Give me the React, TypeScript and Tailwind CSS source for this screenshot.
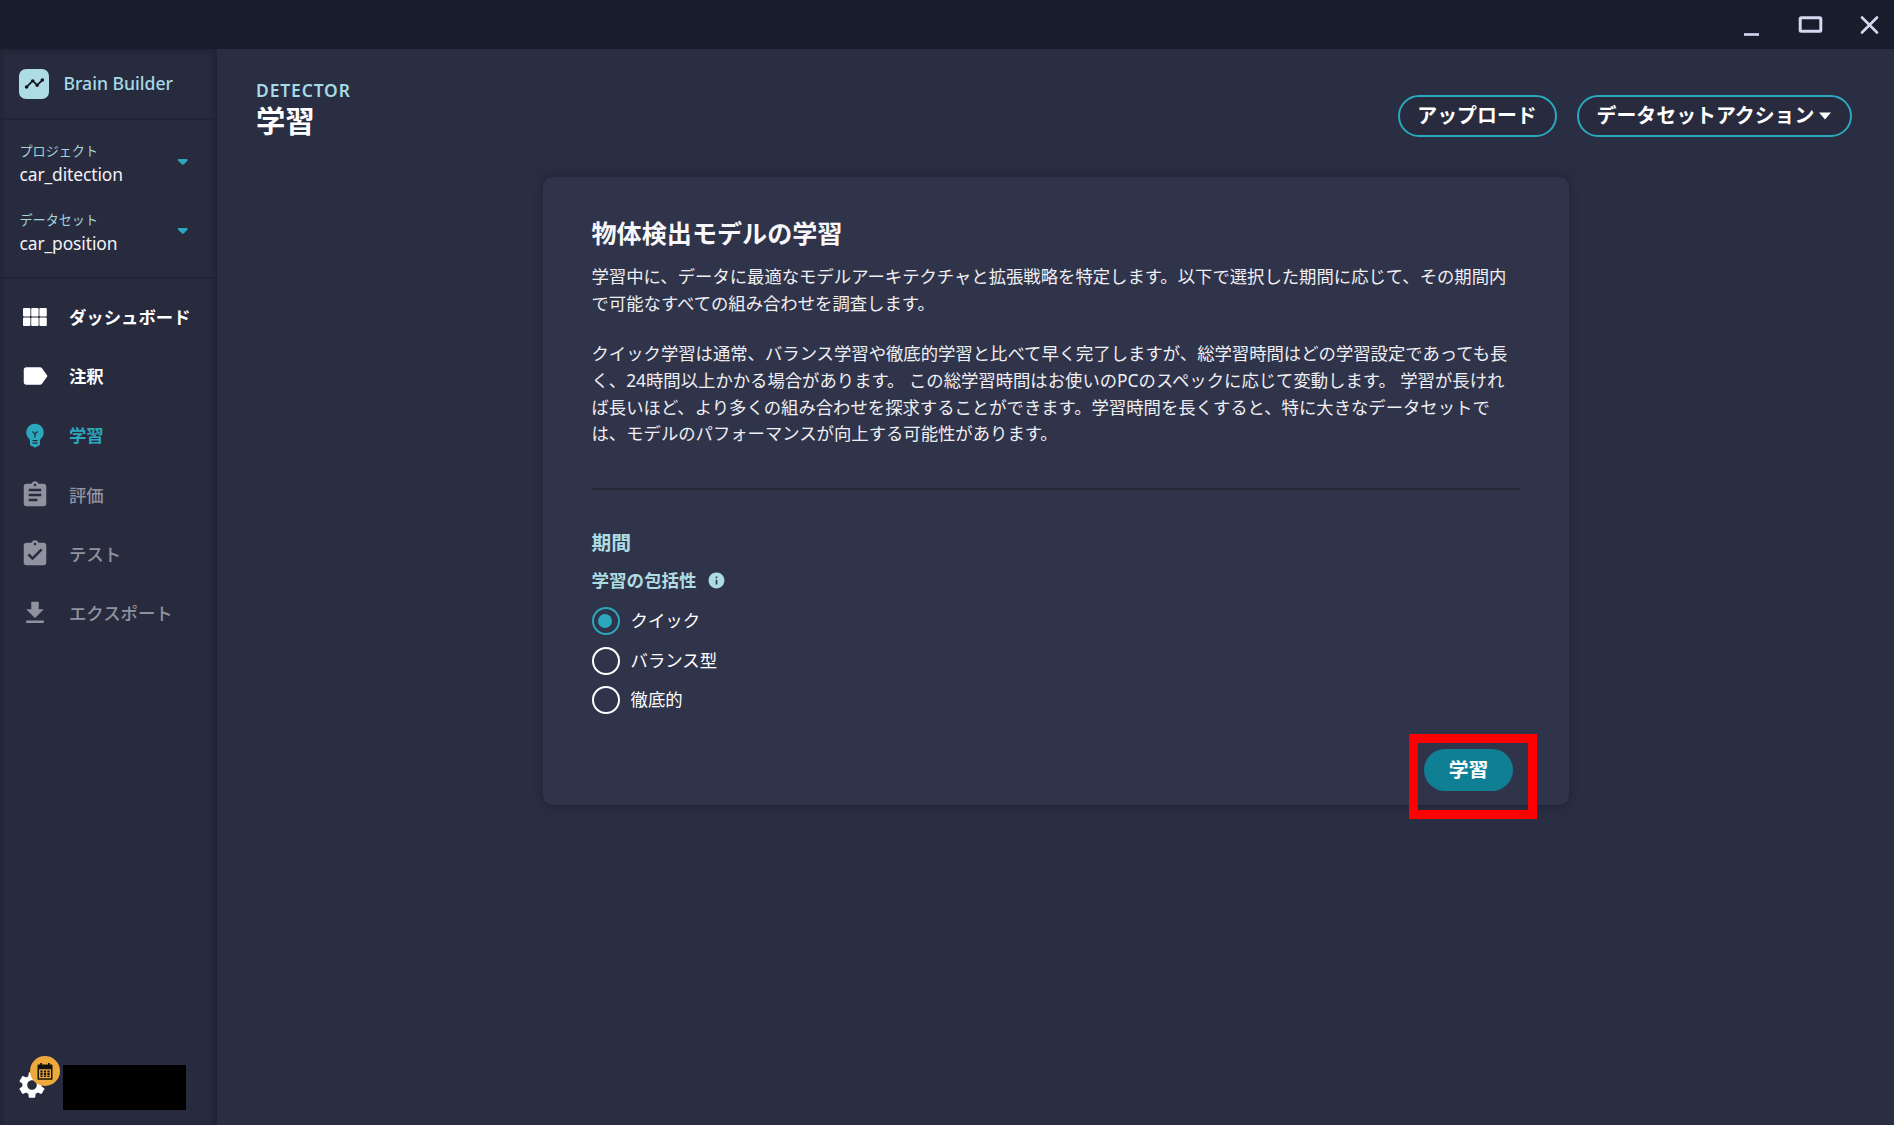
import {
  MdAssignment,
  MdAssignmentTurnedIn,
  MdDownload,
  MdEmojiObjects,
  MdInfo,
  MdLabel,
  MdSettings,
  MdTimeline,
} from 'react-icons/md';
import { clsx } from 'clsx';
import { useState } from 'react';
import type { ComponentType } from 'react';

type IconProps = { className?: string };

function GridIcon({ className }: IconProps) {
  return (
    <svg viewBox="0 0 30 30" fill="currentColor" className={className}>
      <rect x="3" y="6" width="7.4" height="8.6" rx="1" />
      <rect x="11.2" y="6" width="7.4" height="8.6" rx="1" />
      <rect x="19.4" y="6" width="7.4" height="8.6" rx="1" />
      <rect x="3" y="15.4" width="7.4" height="8.6" rx="1" />
      <rect x="11.2" y="15.4" width="7.4" height="8.6" rx="1" />
      <rect x="19.4" y="15.4" width="7.4" height="8.6" rx="1" />
    </svg>
  );
}

function CalendarIcon({ className }: IconProps) {
  return (
    <svg viewBox="0 0 16 17" fill="currentColor" className={className}>
      <path d="M3.2 0h1.8v3H3.2zM11 0h1.8v3H11z" />
      <path
        fillRule="evenodd"
        d="M1.5 1.6h13c.6 0 1 .4 1 1v13.2c0 .6-.4 1-1 1h-13c-.6 0-1-.4-1-1V2.6c0-.6.4-1 1-1zM2 6.2v9.1h12V6.2z"
      />
      <path d="M3.4 7.6h2.2v1.8H3.4zM6.9 7.6h2.2v1.8H6.9zM10.4 7.6h2.2v1.8h-2.2zM3.4 10.1h2.2v1.8H3.4zM6.9 10.1h2.2v1.8H6.9zM10.4 10.1h2.2v1.8h-2.2zM3.4 12.6h2.2v1.4H3.4zM6.9 12.6h2.2v1.4H6.9zM10.4 12.6h2.2v1.4h-2.2z" />
    </svg>
  );
}

type NavItem = {
  label: string;
  icon: ComponentType<IconProps>;
  state: 'enabled' | 'active' | 'disabled';
};

const navItems: NavItem[] = [
  { label: 'ダッシュボード', icon: GridIcon, state: 'enabled' },
  { label: '注釈', icon: MdLabel, state: 'enabled' },
  { label: '学習', icon: MdEmojiObjects, state: 'active' },
  { label: '評価', icon: MdAssignment, state: 'disabled' },
  { label: 'テスト', icon: MdAssignmentTurnedIn, state: 'disabled' },
  { label: 'エクスポート', icon: MdDownload, state: 'disabled' },
];

const durations = ['クイック', 'バランス型', '徹底的'];

function TitleBar() {
  return (
    <header className="flex h-[49px] shrink-0 items-start justify-end bg-[#191c2a] text-[#d5d8f0]">
      <svg width="150" height="49" viewBox="0 0 150 49" fill="none" stroke="currentColor">
        <path d="M0 34.5h15" strokeWidth="2.6" />
        <rect x="56.2" y="17.7" width="20.6" height="13.6" rx="1" strokeWidth="3" />
        <path d="M118 17.5l15 15M133 17.5l-15 15" strokeWidth="2.6" strokeLinecap="round" />
      </svg>
    </header>
  );
}

function Selector({ label, value }: { label: string; value: string }) {
  return (
    <button className="flex h-[69px] w-full items-center justify-between pr-[28px] pl-[19.5px] text-left">
      <span className="flex flex-col">
        <span className="text-[13.1px] leading-[23px] text-[#a5d3da]">{label}</span>
        <span className="text-[17.4px] leading-[23px] tracking-[-0.1px] text-[#f3f3f6]">{value}</span>
      </span>
      <svg width="12" height="8" viewBox="0 0 12 8" fill="#2ba8bd" className="-mt-[1px]">
        <path d="M1.8 1h7.8c1 0 1.4 1 .8 1.7L7.2 6.1c-.8.9-1.9.9-2.7 0L1.1 2.7C.5 2 .8 1 1.8 1z" />
      </svg>
    </button>
  );
}

function Sidebar() {
  return (
    <aside className="flex w-[217px] shrink-0 flex-col bg-[#282b3e] shadow-[inset_-5px_0_6px_-2px_#212434,inset_0_3px_5px_-2px_#212434,inset_3px_0_5px_-3px_#212434]">
      <div className="flex h-[71px] items-center gap-[14.5px] border-b-2 border-[#212434] pl-[19px]">
        <span className="flex size-[30px] items-center justify-center rounded-[7px] bg-[#addce4]">
          <MdTimeline className="size-[21px] text-[#12141d]" />
        </span>
        <span className="text-[17.6px] font-medium text-[#a5dbe6]">Brain Builder</span>
      </div>

      <div className="h-[159px] border-b-2 border-[#212434] pt-[8px]">
        <Selector label="プロジェクト" value="car_ditection" />
        <Selector label="データセット" value="car_position" />
      </div>

      <nav className="flex flex-col pt-[8.5px]">
        {navItems.map(({ label, icon: Icon, state }) => (
          <button
            key={label}
            disabled={state === 'disabled'}
            className={clsx(
              'flex h-[59.2px] items-center gap-[19px] pl-[20px] text-[17.36px]',
              state === 'enabled' && 'font-bold text-white',
              state === 'active' && 'font-bold text-[#2ba8bd]',
              state === 'disabled' && 'font-medium text-[#9192a0]'
            )}
          >
            <Icon className="size-[30px]" />
            <span>{label}</span>
          </button>
        ))}
      </nav>

      <div className="mt-auto flex h-[75px] items-start pl-[16px]">
        <div className="relative h-[60px] w-[47px]">
          <MdSettings className="mt-[19px] size-[32px] text-white" />
          <span className="absolute top-[6px] left-[14px] flex size-[30px] items-center justify-center rounded-full bg-[#eda93b]">
            <CalendarIcon className="h-[17px] w-[16px] text-[#15120c]" />
          </span>
        </div>
        <div className="mt-[15px] h-[45px] w-[123px] bg-black" />
      </div>
    </aside>
  );
}

function PageHeader() {
  return (
    <div className="flex justify-between pr-[42px] pl-[39px]">
      <div className="pt-[29px]">
        <p className="text-[17.4px] leading-[24px] font-semibold tracking-[0.9px] text-[#a5dbe6]">DETECTOR</p>
        <h1 className="-mt-px text-[29.3px] leading-[40px] font-bold text-white">学習</h1>
      </div>
      <div className="mt-[46px] flex h-[42px] gap-[20px] text-[19.9px] font-bold text-white">
        <button className="flex w-[159px] items-center justify-center rounded-full border-2 border-[#2ba8bd] bg-[#282b3e] pr-[1px]">
          アップロード
        </button>
        <button className="flex w-[275px] items-center justify-center gap-[5px] rounded-full border-2 border-[#2ba8bd] bg-[#282b3e] pr-[1px]">
          データセットアクション
          <svg width="12" height="8" viewBox="0 0 12 8" fill="currentColor">
            <path d="M0 .5h12L6 7.5z" />
          </svg>
        </button>
      </div>
    </div>
  );
}

function TrainingCard() {
  const [duration, setDuration] = useState('クイック');

  return (
    <section className="mt-[36px] ml-[325.5px] h-[628px] w-[1026px] rounded-[10px] bg-[#30344a] px-[49px] pt-[38px] shadow-[0_0_8px_2px_#232637]">
      <h2 className="text-[25.1px] leading-[36px] font-bold text-[#f8f8fa]">物体検出モデルの学習</h2>

      <div className="mt-[12px] text-[17.35px] leading-[26.67px] whitespace-nowrap text-[#efeff3]">
        <p>
          学習中に、データに最適なモデルアーキテクチャと拡張戦略を特定します。以下で選択した期間に応じて、その期間内
          <br />
          で可能なすべての組み合わせを調査します。
        </p>
        <p className="mt-[24px]">
          クイック学習は通常、バランス学習や徹底的学習と比べて早く完了しますが、総学習時間はどの学習設定であっても長
          <br />
          く、24時間以上かかる場合があります。 この総学習時間はお使いのPCのスペックに応じて変動します。 学習が長けれ
          <br />
          ば長いほど、より多くの組み合わせを探求することができます。学習時間を長くすると、特に大きなデータセットで
          <br />
          は、モデルのパフォーマンスが向上する可能性があります。
        </p>
      </div>

      <hr className="mt-[41px] w-[928px] border-t-2 border-[#272a3b]" />

      <h3 className="mt-[38px] text-[19.8px] leading-[30px] font-bold text-[#addce4]">期間</h3>
      <div className="mt-[8px] flex h-[28px] items-center gap-[10px] text-[17.5px] font-bold text-[#addce4]">
        学習の包括性
        <MdInfo className="size-[19px]" />
      </div>

      <div className="mt-[7.5px] flex flex-col">
        {durations.map((name) => (
          <button
            key={name}
            onClick={() => setDuration(name)}
            className="flex h-[39.5px] items-center gap-[11px] text-[17.4px] text-white"
          >
            <span
              className={clsx(
                'flex size-[28px] items-center justify-center rounded-full border-2',
                name === duration ? 'border-[#2ba8bd]' : 'border-white'
              )}
            >
              {name === duration && <span className="mr-[1px] size-[14px] rounded-full bg-[#2ba8bd]" />}
            </span>
            <span className="pb-[2px]">{name}</span>
          </button>
        ))}
      </div>

      <div className="mt-[29px] mr-[6.5px] flex justify-end">
        <div className="relative">
          <button className="h-[42px] w-[89px] rounded-full bg-[#0f8093] text-[19.8px] font-bold text-white">
            学習
          </button>
          <span className="pointer-events-none absolute -top-[15px] -left-[15px] h-[85px] w-[128px] border-[9px] border-[#ff0000]" />
        </div>
      </div>
    </section>
  );
}

export default function App() {
  return (
    <div
      lang="ja"
      className="flex h-[1125px] w-[1894px] flex-col overflow-hidden bg-[#2a2e42] font-['Noto_Sans','Noto_Sans_CJK_JP',sans-serif]"
    >
      <TitleBar />
      <div className="flex min-h-0 flex-1">
        <Sidebar />
        <main className="flex-1">
          <PageHeader />
          <TrainingCard />
        </main>
      </div>
    </div>
  );
}
